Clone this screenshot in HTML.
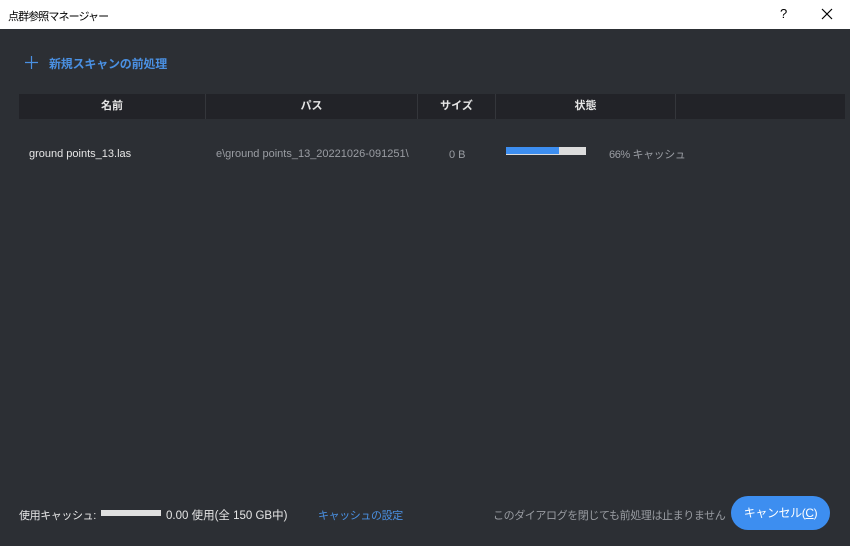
<!DOCTYPE html>
<html><head><meta charset="utf-8"><style>
*{margin:0;padding:0;box-sizing:border-box}
body{width:850px;height:546px;overflow:hidden;background:#2c2f34;font-family:"Liberation Sans","Noto Sans CJK JP",sans-serif;position:relative}
.tb{position:absolute;left:0;top:0;width:850px;height:29px;background:#fff;color:#000;font-size:11px}
.t{position:absolute;white-space:nowrap}
.j{font-size:11px;letter-spacing:-0.4px}
.hdr{position:absolute;left:19px;top:94px;width:826px;height:25px;background:#222328}
.hdr .c{position:absolute;top:0;height:25px;line-height:25px;text-align:center;color:#e6e6e6;font-size:11px;font-weight:bold;border-right:1px solid #34363b}
</style></head><body>
<div class="tb">
<div class="t" style="left:8px;top:8px;letter-spacing:-0.9px">点群参照マネージャー</div>
<div class="t" style="left:780px;top:6px;font-size:13px">?</div>
<svg class="t" style="left:821px;top:8px" width="12" height="12"><path d="M1 1L11 11M11 1L1 11" stroke="#000" stroke-width="1.2"/></svg>
</div>
<svg class="t" style="left:25px;top:56px" width="13" height="13"><path d="M6.5 0V13M0 6.5H13" stroke="#4a90e2" stroke-width="1.2"/></svg>
<div class="t" style="left:49px;top:55px;color:#4a90e2;font-size:12px;font-weight:bold;letter-spacing:-0.2px">新規スキャンの前処理</div>
<div class="hdr">
<div class="c" style="left:0;width:187px">名前</div>
<div class="c" style="left:187px;width:212px">パス</div>
<div class="c" style="left:399px;width:78px">サイズ</div>
<div class="c" style="left:477px;width:180px">状態</div>
</div>
<div class="t" style="left:29px;top:148px;color:#e6e6e6;font-size:11px">ground points_13.las</div>
<div class="t" style="left:216px;top:148px;color:#9a9da3;font-size:11px">e\ground points_13_20221026-091251\</div>
<div class="t" style="left:449px;top:149px;color:#9a9da3;font-size:11px">0 B</div>
<div class="t" style="left:506px;top:147px;width:80px;height:8px;background:#dcdcdc"><div style="width:53px;height:7px;background:#3d8ef0"></div></div>
<div class="t j" style="left:609px;top:146px;color:#9a9da3;font-size:11px">66% キャッシュ</div>
<div class="t j" style="left:19px;top:507px;color:#e6e6e6">使用キャッシュ:</div>
<div class="t" style="left:101px;top:510px;width:60px;height:6px;background:#e0e0e0"></div>
<div class="t" style="left:166px;top:507px;color:#e6e6e6;font-size:11.5px">0.00 使用(全 150 GB中)</div>
<div class="t j" style="left:318px;top:507px;color:#4a90e2">キャッシュの設定</div>
<div class="t j" style="left:493px;top:507px;color:#9a9da3">このダイアログを閉じても前処理は止まりません</div>
<div class="t j" style="left:731px;top:496px;width:99px;height:34px;border-radius:17px;background:#3d8ef0;color:#fff;text-align:center;line-height:34px;font-size:12px">キャンセル(<u>C</u>)</div>
</body></html>
